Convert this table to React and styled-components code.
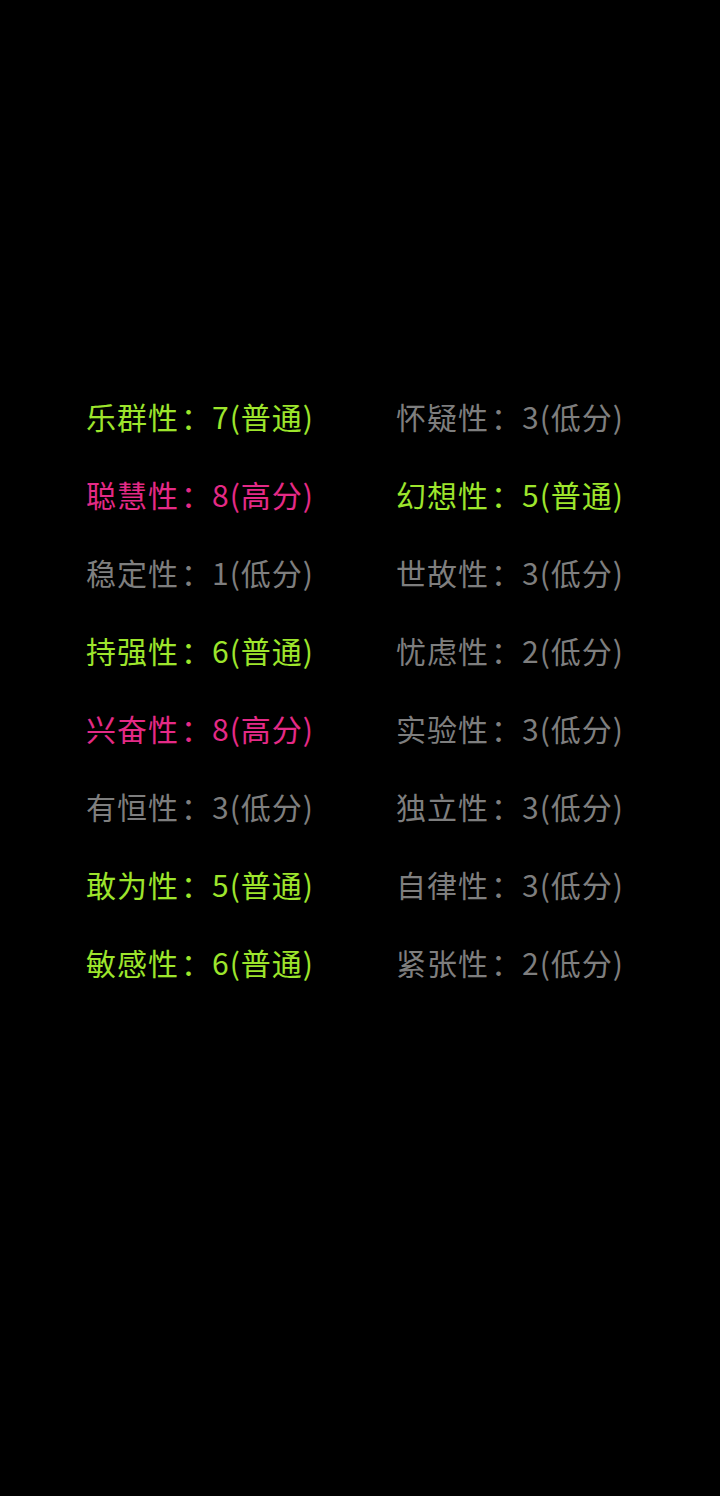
import React from "react";
import styled, { createGlobalStyle } from "styled-components";

const GlobalStyle = createGlobalStyle`
  html, body {
    margin: 0;
    padding: 0;
    background: #000;
  }
  body {
    font-family: "Noto Sans CJK SC", "Noto Sans", sans-serif;
  }
`;

const traits = [
  ["乐群性", 7, "普通"],
  ["怀疑性", 3, "低分"],
  ["聪慧性", 8, "高分"],
  ["幻想性", 5, "普通"],
  ["稳定性", 1, "低分"],
  ["世故性", 3, "低分"],
  ["持强性", 6, "普通"],
  ["忧虑性", 2, "低分"],
  ["兴奋性", 8, "高分"],
  ["实验性", 3, "低分"],
  ["有恒性", 3, "低分"],
  ["独立性", 3, "低分"],
  ["敢为性", 5, "普通"],
  ["自律性", 3, "低分"],
  ["敏感性", 6, "普通"],
  ["紧张性", 2, "低分"],
];

const colors = {
  普通: "#9de52c",
  高分: "#e42a86",
  低分: "#7e7e7e",
};

const Page = styled.div`
  width: 720px;
  height: 1496px;
  background: #000;
  box-sizing: border-box;
  padding: 390px 0 0 86px;
`;

const Grid = styled.div`
  display: grid;
  grid-template-columns: 310px 310px;
`;

const Item = styled.div`
  height: 78px;
  line-height: 52px;
  font-size: 30px;
  letter-spacing: 1px;
  white-space: nowrap;
  color: ${(p) => p.$color};
`;

const Colon = styled.span`
  margin-left: 2px;
`;

export default function App() {
  return (
    <>
      <GlobalStyle />
      <Page>
        <Grid>
          {traits.map(([name, score, level]) => (
            <Item key={name} $color={colors[level]}>
              {name}
              <Colon>：</Colon>
              {score}({level})
            </Item>
          ))}
        </Grid>
      </Page>
    </>
  );
}
